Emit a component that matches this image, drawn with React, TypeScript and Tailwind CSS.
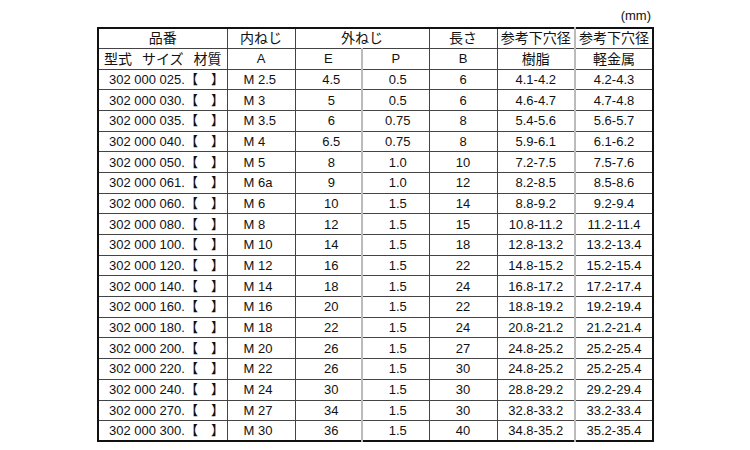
import React from 'react'

const ROWS: [string, string, string, string, string, string, string][] = [
  ['025', 'M 2.5', '4.5', '0.5', '6', '4.1-4.2', '4.2-4.3'],
  ['030', 'M 3', '5', '0.5', '6', '4.6-4.7', '4.7-4.8'],
  ['035', 'M 3.5', '6', '0.75', '8', '5.4-5.6', '5.6-5.7'],
  ['040', 'M 4', '6.5', '0.75', '8', '5.9-6.1', '6.1-6.2'],
  ['050', 'M 5', '8', '1.0', '10', '7.2-7.5', '7.5-7.6'],
  ['061', 'M 6a', '9', '1.0', '12', '8.2-8.5', '8.5-8.6'],
  ['060', 'M 6', '10', '1.5', '14', '8.8-9.2', '9.2-9.4'],
  ['080', 'M 8', '12', '1.5', '15', '10.8-11.2', '11.2-11.4'],
  ['100', 'M 10', '14', '1.5', '18', '12.8-13.2', '13.2-13.4'],
  ['120', 'M 12', '16', '1.5', '22', '14.8-15.2', '15.2-15.4'],
  ['140', 'M 14', '18', '1.5', '24', '16.8-17.2', '17.2-17.4'],
  ['160', 'M 16', '20', '1.5', '22', '18.8-19.2', '19.2-19.4'],
  ['180', 'M 18', '22', '1.5', '24', '20.8-21.2', '21.2-21.4'],
  ['200', 'M 20', '26', '1.5', '27', '24.8-25.2', '25.2-25.4'],
  ['220', 'M 22', '26', '1.5', '30', '24.8-25.2', '25.2-25.4'],
  ['240', 'M 24', '30', '1.5', '30', '28.8-29.2', '29.2-29.4'],
  ['270', 'M 27', '34', '1.5', '30', '32.8-33.2', '33.2-33.4'],
  ['300', 'M 30', '36', '1.5', '40', '34.8-35.2', '35.2-35.4'],
]

const cell = 'border border-[#444] p-0 text-center align-middle'

export default function App() {
  return (
    <div
      className="w-[750px] h-[450px] bg-white text-[#111] text-[13px] leading-none pl-[97px] pt-[9px]"
      style={{ fontFamily: '"Liberation Sans", "Noto Sans CJK JP", sans-serif' }}
    >
      <div className="w-[555px]">
        {/* unit */}
        <div className="h-[18px] text-right pr-[1px]">(mm)</div>

        <table className="w-[555px] table-fixed border-collapse border-2 border-[#111]">
          <colgroup>
            <col className="w-[129px]" />
            <col className="w-[68px]" />
            <col className="w-[67px]" />
            <col className="w-[67px]" />
            <col className="w-[68px]" />
            <col className="w-[78px]" />
            <col className="w-[78px]" />
          </colgroup>
          <thead>
            <tr className="h-[20px] text-[14px]">
              <th className={`${cell} font-normal`}>品番</th>
              <th className={`${cell} font-normal`}>内ねじ</th>
              <th colSpan={2} className={`${cell} font-normal`}>外ねじ</th>
              <th className={`${cell} font-normal`}>長さ</th>
              <th className={`${cell} font-normal border-r-2 border-r-[#bbb]`}>参考下穴径</th>
              <th className={`${cell} font-normal`}>参考下穴径</th>
            </tr>
            <tr className="h-[21px] text-[14px]">
              <th className={`${cell} font-normal`}>
                <div className="flex justify-between px-[5px]">
                  <span>型式</span>
                  <span>サイズ</span>
                  <span>材質</span>
                </div>
              </th>
              <th className={`${cell} font-normal text-[13px]`}>A</th>
              <th className={`${cell} font-normal text-[13px] border-r-2 border-r-[#bbb]`}>E</th>
              <th className={`${cell} font-normal text-[13px]`}>P</th>
              <th className={`${cell} font-normal text-[13px]`}>B</th>
              <th className={`${cell} font-normal border-r-2 border-r-[#bbb]`}>樹脂</th>
              <th className={`${cell} font-normal`}>軽金属</th>
            </tr>
          </thead>
          <tbody>
            {ROWS.map((r) => (
              <tr key={r[0]} className="h-[20.7px]">
                <td className={`${cell} text-left pl-[10px] whitespace-nowrap`}>
                  302 000 {r[0]}.【　】
                </td>
                <td className={`${cell} text-left pl-[16px]`}>{r[1]}</td>
                <td className={`${cell} pl-[6px] border-r-2 border-r-[#bbb]`}>{r[2]}</td>
                <td className={`${cell} pl-[4px]`}>{r[3]}</td>
                <td className={cell}>{r[4]}</td>
                <td className={`${cell} border-r-2 border-r-[#bbb]`}>{r[5]}</td>
                <td className={cell}>{r[6]}</td>
              </tr>
            ))}
          </tbody>
        </table>
      </div>
    </div>
  )
}
